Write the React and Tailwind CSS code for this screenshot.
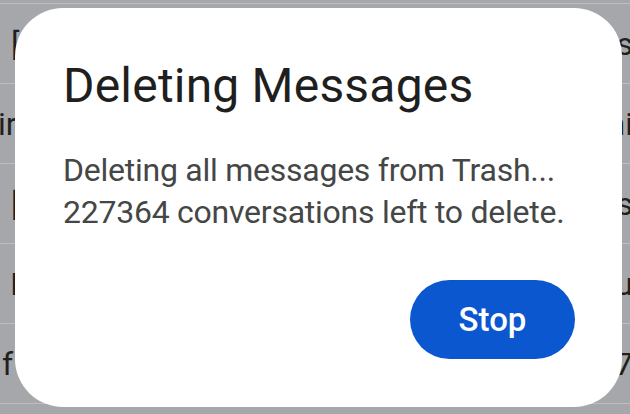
import React from "react";

const rows = [
    { left: "[", leftPad: "pl-[11px]", right: "s" },
    { left: "ir", leftPad: "-ml-[2px]", right: "ni" },
    { left: "[", leftPad: "pl-[11px]", right: "s" },
    { left: "I", leftPad: "pl-[10px]", right: "u" },
    { left: "f", leftPad: "pl-[2px]", right: "7" },
];

export default function App() {
    return (
        <div
            className="relative w-[630px] h-[414px] overflow-hidden bg-[#a6a7aa]"
            style={{ fontFamily: "Roboto, 'Liberation Sans', sans-serif" }}
        >
            <div className="pt-[3px]">
                {rows.map((row, index) => (
                    <div
                        key={index}
                        className="flex items-center justify-between h-[80px] border-t border-[#bdbec1] text-[32px] text-[#1f1f1f]"
                    >
                        <span className={row.leftPad}>{row.left}</span>
                        <span className="-mr-[3px]">{row.right}</span>
                    </div>
                ))}
                <div className="border-t border-[#bdbec1]" />
            </div>

            <div className="absolute left-[15px] top-[8px] w-[607px] h-[399px] rounded-[48px] bg-white flex flex-col px-[48px]">
                <h1 className="mt-[50px] text-[48px] leading-[56px] text-[#1f1f1f] tracking-[0.2px] whitespace-nowrap">
                    Deleting Messages
                </h1>
                <p className="mt-[35px] text-[32px] leading-[42px] text-[#444746] tracking-[-0.25px] whitespace-nowrap">
                    Deleting all messages from Trash...
                    <br />
                    227364 conversations left to delete.
                </p>
                <div className="flex justify-end mt-auto mb-[48px] -mr-[1px]">
                    <button className="w-[165px] h-[79px] rounded-full bg-[#0b57d0] text-white text-[33px] font-medium">
                        Stop
                    </button>
                </div>
            </div>
        </div>
    );
}
